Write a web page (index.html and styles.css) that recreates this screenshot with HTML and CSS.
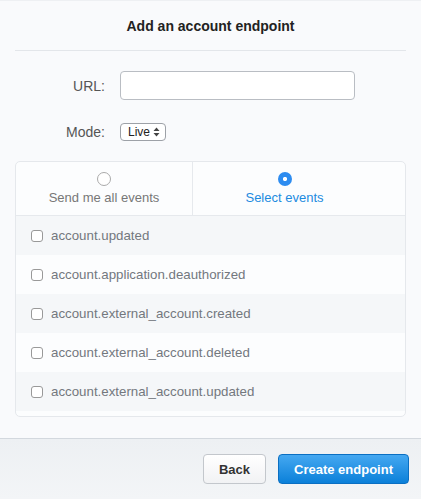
FILE: index.html
```
<!DOCTYPE html>
<html>
<head>
<meta charset="utf-8">
<link rel="stylesheet" href="styles.css">
</head>
<body>
<div class="dialog">
  <div class="main">
    <h1 class="title">Add an account endpoint</h1>
    <div class="form">
      <div class="field">
        <label class="label">URL:</label>
        <div class="input"></div>
      </div>
      <div class="field mode">
        <label class="label">Mode:</label>
        <div class="select"><span>Live</span><svg width="7" height="10" viewBox="0 0 7 10"><path d="M3.5 0.5L6.5 4H0.5Z M3.5 9.5L6.5 6H0.5Z" fill="#444"/></svg></div>
      </div>
    </div>
    <div class="card">
      <div class="tabs">
        <div class="tab left">
          <span class="radio"></span>
          <span class="tab-text">Send me all events</span>
        </div>
        <div class="tab right active">
          <span class="radio on"></span>
          <span class="tab-text">Select events</span>
        </div>
        <div class="tab-fill"></div>
      </div>
      <div class="rows">
        <div class="row alt"><span class="check"></span>account.updated</div>
        <div class="row"><span class="check"></span>account.application.deauthorized</div>
        <div class="row alt"><span class="check"></span>account.external_account.created</div>
        <div class="row"><span class="check"></span>account.external_account.deleted</div>
        <div class="row alt"><span class="check"></span>account.external_account.updated</div>
      </div>
    </div>
  </div>
  <div class="footer">
    <button class="btn back">Back</button>
    <button class="btn primary">Create endpoint</button>
  </div>
</div>
</body>
</html>
```
FILE: styles.css
```
* { box-sizing: border-box; }
html, body { margin: 0; padding: 0; }
body {
  font-family: "Liberation Sans", Arial, sans-serif;
  background: #f9fafc;
  width: 421px;
  height: 499px;
  overflow: hidden;
}
.dialog {
  display: flex;
  flex-direction: column;
  height: 499px;
  border-top: 1px solid #eef0f3;
}
.main {
  flex: 1;
  padding: 0 15px;
}
.title {
  margin: 0;
  font-size: 14px;
  font-weight: bold;
  color: #222;
  text-align: center;
  height: 50px;
  line-height: 51px;
  border-bottom: 1px solid #e3e6ea;
}
.form {
  padding-top: 20px;
}
.field {
  display: flex;
  align-items: center;
}
.label {
  width: 105px;
  text-align: right;
  font-size: 14px;
  color: #555;
  padding-right: 15px;
}
.input {
  width: 235px;
  height: 29px;
  background: #fff;
  border: 1px solid #b9bdc3;
  border-radius: 4px;
}
.mode {
  margin-top: 23px;
}
.select {
  display: flex;
  align-items: center;
  gap: 3px;
  height: 18px;
  width: 46px;
  padding: 0 4px 0 7px;
  border: 1px solid #9da1a7;
  border-radius: 4px;
  background: #fff;
  font-size: 12px;
  color: #222;
}
.card {
  margin-top: 20px;
  border: 1px solid #e5e8ec;
  border-radius: 5px;
  background: #fcfdfe;
  padding-bottom: 5px;
}
.tabs {
  display: flex;
  height: 54px;
  border-bottom: 1px solid #e6e9ed;
}
.tab {
  display: flex;
  flex-direction: column;
  align-items: center;
  padding-top: 10px;
  gap: 4px;
}
.tab.left {
  width: 177px;
  border-right: 1px solid #e6e9ed;
}
.tab.right {
  width: 183px;
}
.tab-fill { flex: 1; }
.radio {
  width: 14px;
  height: 14px;
  border-radius: 50%;
  border: 1px solid #aaa;
  background: #fff;
}
.radio.on {
  border: none;
  background: radial-gradient(circle, #fff 0 1.8px, #2d8cf0 2.4px);
}
.tab-text {
  font-size: 13px;
  color: #777;
}
.active .tab-text { color: #1c8be0; }
.rows { display: flex; flex-direction: column; }
.row {
  display: flex;
  align-items: center;
  height: 39px;
  padding-left: 15px;
  font-size: 13.3px;
  color: #73787e;
}
.row.alt { background: #f5f7f9; }
.check {
  width: 12px;
  height: 12px;
  border: 1px solid #999;
  border-radius: 3px;
  background: #fff;
  margin-right: 8px;
}
.footer {
  height: 61px;
  border-top: 1px solid #d3d8de;
  background: linear-gradient(#edf0f3, #f3f5f7);
  display: flex;
  justify-content: flex-end;
  align-items: flex-start;
  padding: 15px 12px 0 0;
  gap: 12px;
}
.btn {
  height: 30px;
  border-radius: 4px;
  font-family: "Liberation Sans", Arial, sans-serif;
  font-size: 13px;
  font-weight: bold;
  padding: 0;
}
.back {
  width: 63px;
  border: 1px solid #c3c7cc;
  background: linear-gradient(#ffffff, #f1f2f4);
  color: #333;
}
.primary {
  width: 131px;
  border: 1px solid #0a6fc2;
  background: linear-gradient(#45a8f1, #0b80d9);
  color: #fff;
}
```
